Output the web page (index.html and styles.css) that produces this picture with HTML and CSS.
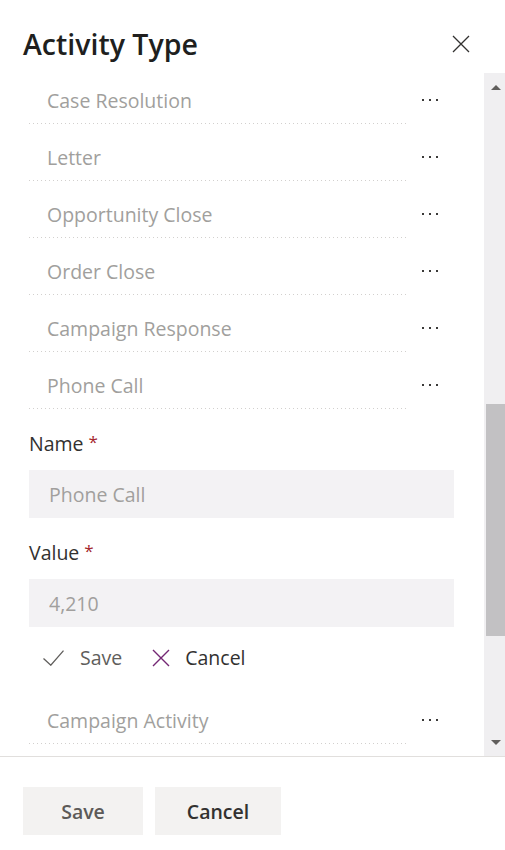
FILE: index.html
```html
<!DOCTYPE html>
<html lang="en">
<head>
    <meta charset="UTF-8">
    <meta name="viewport" content="width=device-width, initial-scale=1.0">
    <title>Activity Type</title>
    <link rel="stylesheet" href="styles.css">
</head>
<body>
    <div class="panel">
        <header class="panel-header">
            <h1>Activity Type</h1>
            <button class="close-btn" aria-label="Close">
                <svg width="18" height="18" viewBox="0 0 18 18">
                    <path d="M1 1 L17 17 M17 1 L1 17" stroke="#323130" stroke-width="1.3" fill="none"/>
                </svg>
            </button>
        </header>

        <div class="panel-body">
            <div class="scroll-area">
                <ul class="type-list first">
                    <li class="type-row"><span class="type-name">Case Resolution</span><button class="more-btn" aria-label="More"></button></li>
                    <li class="type-row"><span class="type-name">Letter</span><button class="more-btn" aria-label="More"></button></li>
                    <li class="type-row"><span class="type-name">Opportunity Close</span><button class="more-btn" aria-label="More"></button></li>
                    <li class="type-row"><span class="type-name">Order Close</span><button class="more-btn" aria-label="More"></button></li>
                    <li class="type-row"><span class="type-name">Campaign Response</span><button class="more-btn" aria-label="More"></button></li>
                    <li class="type-row"><span class="type-name">Phone Call</span><button class="more-btn" aria-label="More"></button></li>
                </ul>

                <div class="edit-form">
                    <label class="field-label" for="name">Name <span class="req">*</span></label>
                    <input class="field-input" id="name" type="text" placeholder="Phone Call">

                    <label class="field-label second" for="value">Value <span class="req">*</span></label>
                    <input class="field-input" id="value" type="text" placeholder="4,210">

                    <div class="edit-actions">
                        <button class="action save">
                            <svg width="21" height="16" viewBox="0 0 21 16">
                                <path d="M0.5 8.5 L7.8 15.2 L20.5 0.6" stroke="#605e5c" stroke-width="1.3" fill="none"/>
                            </svg>
                            <span>Save</span>
                        </button>
                        <button class="action cancel">
                            <svg width="18" height="18" viewBox="0 0 18 18">
                                <path d="M1 1 L17 17 M17 1 L1 17" stroke="#742774" stroke-width="1.4" fill="none"/>
                            </svg>
                            <span>Cancel</span>
                        </button>
                    </div>
                </div>

                <ul class="type-list">
                    <li class="type-row"><span class="type-name">Campaign Activity</span><button class="more-btn" aria-label="More"></button></li>
                </ul>
            </div>

            <div class="scrollbar">
                <span class="arrow up"></span>
                <div class="track">
                    <div class="thumb"></div>
                </div>
                <span class="arrow down"></span>
            </div>
        </div>

        <footer class="panel-footer">
            <button class="footer-btn save">Save</button>
            <button class="footer-btn">Cancel</button>
        </footer>
    </div>
</body>
</html>
```

FILE: styles.css
```css
* {
    box-sizing: border-box;
}

body {
    margin: 0;
    background-color: #fff;
    font-family: 'Open Sans', 'Noto Sans', Arial, sans-serif;
    color: #323130;
}

button {
    font-family: inherit;
    border: none;
    background: none;
    padding: 0;
    cursor: pointer;
}

.panel {
    width: 505px;
    height: 850px;
    display: flex;
    flex-direction: column;
}

/* header */
.panel-header {
    height: 73px;
    display: flex;
    align-items: center;
    justify-content: space-between;
    padding: 15px 35px 0 23px;
}

.panel-header h1 {
    margin: 0;
    font-size: 28.5px;
    line-height: 36px;
    font-weight: 600;
    color: #201f1e;
}

.close-btn {
    width: 18px;
    height: 18px;
}

.close-btn svg {
    display: block;
}

/* scrolling body */
.panel-body {
    height: 683px;
    display: flex;
}

.scroll-area {
    width: 484px;
    overflow: hidden;
}

.type-list {
    list-style: none;
    margin: 0;
    padding: 0 0 0 29px;
}

.type-list.first {
    margin-top: -6px;
}

.type-row {
    display: flex;
    align-items: flex-start;
}

.type-name {
    width: 377px;
    padding: 20px 0 9px 18px;
    line-height: 28px;
    font-size: 19.5px;
    color: #a19f9d;
    background-image: linear-gradient(to right, #d2d0ce 1px, transparent 1px);
    background-size: 4px 1px;
    background-repeat: repeat-x;
    background-position: left bottom;
}

.more-btn {
    position: relative;
    width: 48px;
    height: 28px;
    margin-top: 20px;
}

.more-btn::before {
    content: "";
    position: absolute;
    left: 16px;
    top: 12px;
    width: 2px;
    height: 2px;
    background-color: #3b3a39;
    box-shadow: 7px 0 0 #3b3a39, 14px 0 0 #3b3a39;
}

/* inline edit form */
.edit-form {
    padding: 21px 0 15px 29px;
    width: 454px;
}

.field-label {
    display: block;
    height: 28px;
    line-height: 28px;
    font-size: 19.5px;
    color: #323130;
}

.field-label.second {
    margin-top: 21px;
}

.req {
    color: #a4262c;
    font-size: 17px;
    line-height: 0;
    vertical-align: 3px;
}

.field-input {
    display: block;
    width: 100%;
    height: 48px;
    margin-top: 12px;
    padding: 0 20px;
    border: none;
    outline: none;
    background-color: #f3f2f4;
    font-family: inherit;
    font-size: 19.5px;
    color: #323130;
}

.field-input::placeholder {
    color: #a19f9d;
}

.edit-actions {
    display: flex;
    margin-top: 17px;
    height: 28px;
    padding-left: 14px;
}

.action {
    display: flex;
    align-items: center;
    font-size: 19.5px;
    line-height: 28px;
}

.action svg {
    display: block;
}

.action.save {
    color: #605e5c;
    gap: 16px;
}

.action.cancel {
    margin-left: 30px;
    color: #323130;
    gap: 15px;
}

/* fake scrollbar */
.scrollbar {
    width: 21px;
    display: flex;
    flex-direction: column;
    background-color: #f0eff1;
}

.arrow {
    height: 28px;
    display: flex;
    align-items: center;
    justify-content: center;
    padding-left: 3px;
}

.arrow::before {
    content: "";
    border-left: 5px solid transparent;
    border-right: 5px solid transparent;
}

.arrow.up::before {
    border-bottom: 5px solid #605e5c;
}

.arrow.down::before {
    border-top: 5px solid #605e5c;
}

.track {
    flex: 1;
    padding-left: 2px;
}

.thumb {
    margin-top: 303px;
    height: 232px;
    background-color: #c2c1c3;
}

/* footer */
.panel-footer {
    border-top: 1px solid #e1dfdd;
    padding: 30px 0 0 23px;
    display: flex;
    gap: 12px;
}

.footer-btn {
    height: 48px;
    background-color: #f3f2f1;
    font-size: 19.5px;
    font-weight: 600;
    color: #323130;
    width: 126px;
}

.footer-btn.save {
    width: 120px;
    color: #5c5a58;
}
```
